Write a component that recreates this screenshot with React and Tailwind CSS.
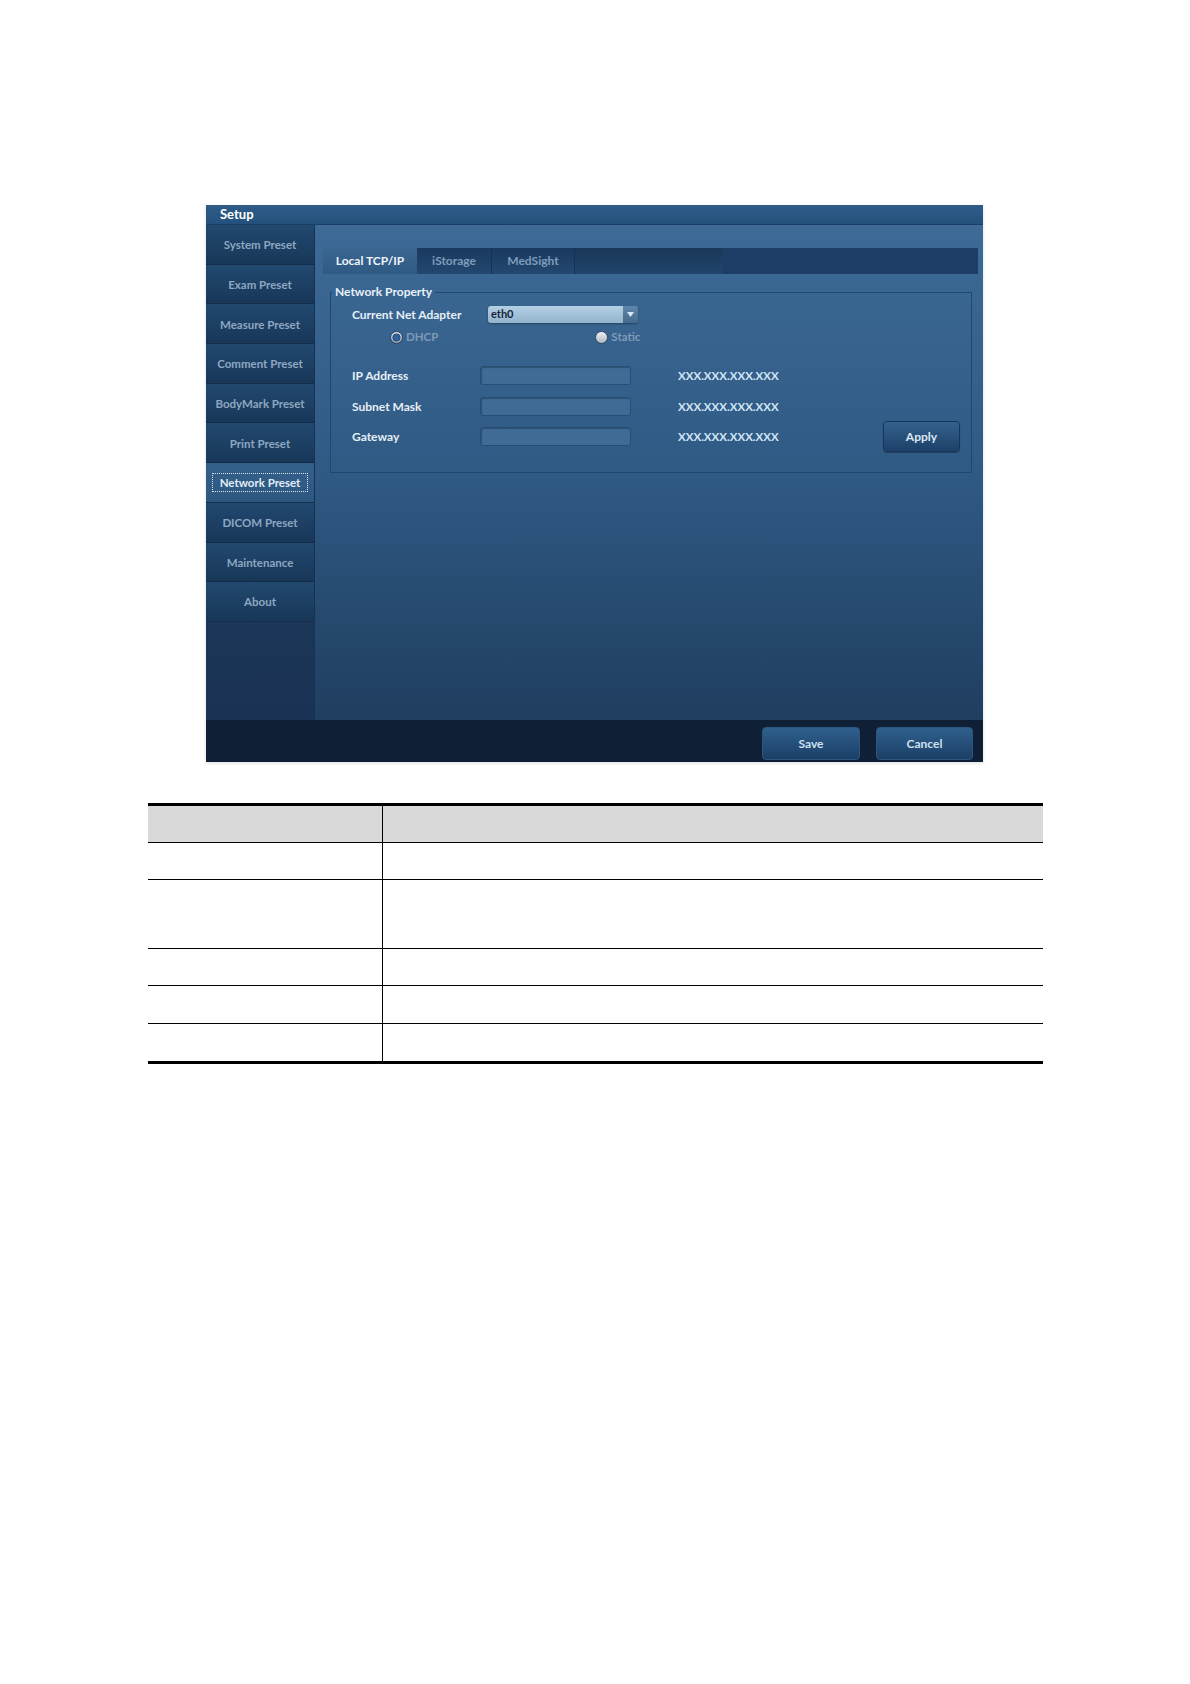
import React from 'react';

const MENU = [
  'System Preset',
  'Exam Preset',
  'Measure Preset',
  'Comment Preset',
  'BodyMark Preset',
  'Print Preset',
  'Network Preset',
  'DICOM Preset',
  'Maintenance',
  'About',
];

function Radio({ checked }) {
  return (
    <svg width="13" height="13" viewBox="0 0 13 13" className="shrink-0">
      <defs>
        <linearGradient id={checked ? 'rOn' : 'rOff'} x1="0" y1="0" x2="0" y2="1">
          <stop offset="0%" stopColor={checked ? '#d6dde4' : '#f2f4f6'} />
          <stop offset="100%" stopColor={checked ? '#8e9aa8' : '#a9b3bd'} />
        </linearGradient>
      </defs>
      <circle cx="6.5" cy="6.5" r="6" fill={`url(#${checked ? 'rOn' : 'rOff'})`} stroke="#1c3553" strokeWidth="0.8" />
      {checked && <circle cx="6.5" cy="6.5" r="3.6" fill="#2f62a0" stroke="#1a3c66" strokeWidth="0.8" />}
    </svg>
  );
}

function Field({ label, gateway }) {
  return (
    <div className="flex items-center h-[19px] pl-[21px] pr-[11px]">
      <span className="w-[128px] text-[12px] font-bold text-[#e7eff7]">{label}</span>
      <div className="w-[151px] h-[19px] rounded-[3px] bg-[#3f6b95] border border-[#264e77] shadow-[inset_1px_1px_1px_rgba(0,0,0,0.25)]" />
      <span className="ml-[47px] text-[11.5px] font-bold text-[#d2e5f6]">XXX.XXX.XXX.XXX</span>
      {gateway && (
        <button className="ml-auto w-[77px] h-[31px] shrink-0 rounded-[4px] border border-[#163659] bg-linear-to-b from-[#34628e] to-[#1d4169] text-[12px] font-bold text-[#dde8f3] shadow-[0_1px_1px_rgba(0,0,0,0.3)]">
          Apply
        </button>
      )}
    </div>
  );
}

export default function App() {
  return (
    <div className="min-h-[1684px] bg-white font-[Lato,sans-serif]">
      <div className="pt-[205px] pl-[206px]">
        <div className="w-[777px] h-[557px] flex flex-col shadow-[0_1px_3px_rgba(0,0,0,0.15)]">
          {/* title bar */}
          <div className="h-[20px] flex items-center pl-[14px] bg-linear-to-b from-[#2f5d89] to-[#24507c] border-b border-[#1a3e66] text-[13px] font-bold text-white">
            Setup
          </div>

          <div className="flex h-[495px]">
            {/* sidebar */}
            <aside className="w-[109px] flex flex-col bg-linear-to-b from-[#1f4268] to-[#1a3354] border-r border-[#163152]">
              {MENU.map((m) => {
                const active = m === 'Network Preset';
                return (
                  <div
                    key={m}
                    className={
                      active
                        ? 'h-[39.7px] flex items-center justify-center px-[6px] pt-[1px] bg-linear-to-b from-[#33608a] to-[#2c5781] border-b border-[#15304f]'
                        : 'h-[39.7px] flex items-center justify-center pt-[1px] bg-linear-to-b from-[#22496f] to-[#183759] border-b border-[#132c4a]'
                    }
                  >
                    {active ? (
                      <span className="w-full h-[19px] flex items-center justify-center border border-dotted border-[#dbe6f2] text-[11.5px] font-bold text-[#e3edf7]">
                        {m}
                      </span>
                    ) : (
                      <span className="text-[11.5px] font-bold text-[#8ea7c1]">{m}</span>
                    )}
                  </div>
                );
              })}
              <div className="flex-1" />
            </aside>

            {/* main */}
            <main className="flex-1 flex flex-col pl-[8px] pr-[5px] pt-[23px] bg-linear-to-b from-[#3d6a96] via-[#2f5a84] to-[#203e60]">
              <div className="h-[26px] flex bg-[#1d3d66]">
                <div className="w-[94px] flex items-center justify-center bg-linear-to-b from-[#3a6792] to-[#2f5a83] text-[12px] font-bold text-[#eef4fa]">
                  Local TCP/IP
                </div>
                <div className="w-[75px] flex items-center justify-center bg-linear-to-b from-[#1a3960] to-[#234870] border-r border-[#16325a] text-[12px] font-bold text-[#7f9cba]">
                  iStorage
                </div>
                <div className="w-[83px] flex items-center justify-center bg-linear-to-b from-[#1a3960] to-[#234870] border-r border-[#16325a] text-[12px] font-bold text-[#7f9cba]">
                  MedSight
                </div>
                <div className="w-[148px] bg-linear-to-b from-[#193759] to-[#21446c]" />
                <div className="flex-1" />
              </div>

              <fieldset className="mt-[10px] ml-[7px] mr-[6px] border border-[#1f4772] pb-[26px]">
                <legend className="ml-[1px] px-[3px] leading-[16px] text-[12px] font-bold text-[#e9f1f8]">
                  Network Property
                </legend>

                <div className="mt-[6px] flex items-center h-[17px] pl-[21px]">
                  <span className="w-[136px] text-[12px] font-bold text-[#e7eff7]">Current Net Adapter</span>
                  <div className="w-[150px] h-[17px] flex rounded-[3px] shadow-[0_1px_2px_rgba(0,0,0,0.35)]">
                    <div className="flex-1 flex items-center pl-[3px] rounded-l-[3px] bg-linear-to-b from-[#b3cfe3] to-[#93b4cd] text-[11px] font-bold text-[#13253a]">
                      eth0
                    </div>
                    <div className="w-[15px] flex items-center justify-center rounded-r-[3px] bg-linear-to-b from-[#6088ab] to-[#44698c]">
                      <svg width="7" height="5" viewBox="0 0 7 5">
                        <path d="M0 0 L7 0 L3.5 5 Z" fill="#dbe8f3" />
                      </svg>
                    </div>
                  </div>
                </div>

                <div className="mt-[7px] h-[14px] flex items-center">
                  <div className="ml-[59px] flex items-center gap-[3px]">
                    <Radio checked />
                    <span className="text-[11.5px] font-bold text-[#7f9bb8]">DHCP</span>
                  </div>
                  <div className="ml-[157px] flex items-center gap-[3px]">
                    <Radio />
                    <span className="text-[11.5px] font-bold text-[#7f9bb8]">Static</span>
                  </div>
                </div>

                <div className="mt-[22px]">
                  <Field label="IP Address" />
                </div>
                <div className="mt-[12px]">
                  <Field label="Subnet Mask" />
                </div>
                <div className="mt-[11px]">
                  <Field label="Gateway" gateway />
                </div>
              </fieldset>
            </main>
          </div>

          {/* bottom bar */}
          <div className="h-[42px] flex justify-end items-start pt-[7px] pr-[10px] gap-[16px] bg-[#0f2036]">
            <button className="w-[98px] h-[33px] rounded-[4px] border border-[#2a5680] bg-linear-to-b from-[#30608d] to-[#1b3f67] text-[12px] font-bold text-[#cfe0f0]">
              Save
            </button>
            <button className="w-[97px] h-[33px] rounded-[4px] border border-[#2a5680] bg-linear-to-b from-[#30608d] to-[#1b3f67] text-[12px] font-bold text-[#cfe0f0]">
              Cancel
            </button>
          </div>
        </div>
      </div>

      {/* parameter table (empty) */}
      <div className="ml-[148px] mt-[41px] w-[895px] border-t-[3px] border-b-[3px] border-black">
        <div className="flex h-[37px] border-b border-black bg-[#d9d9d9]">
          <div className="w-[235px] border-r border-black" />
          <div className="flex-1" />
        </div>
        <div className="flex h-[37px] border-b border-black">
          <div className="w-[235px] border-r border-black" />
          <div className="flex-1" />
        </div>
        <div className="flex h-[69px] border-b border-black">
          <div className="w-[235px] border-r border-black" />
          <div className="flex-1" />
        </div>
        <div className="flex h-[37px] border-b border-black">
          <div className="w-[235px] border-r border-black" />
          <div className="flex-1" />
        </div>
        <div className="flex h-[38px] border-b border-black">
          <div className="w-[235px] border-r border-black" />
          <div className="flex-1" />
        </div>
        <div className="flex h-[37px]">
          <div className="w-[235px] border-r border-black" />
          <div className="flex-1" />
        </div>
      </div>
    </div>
  );
}
